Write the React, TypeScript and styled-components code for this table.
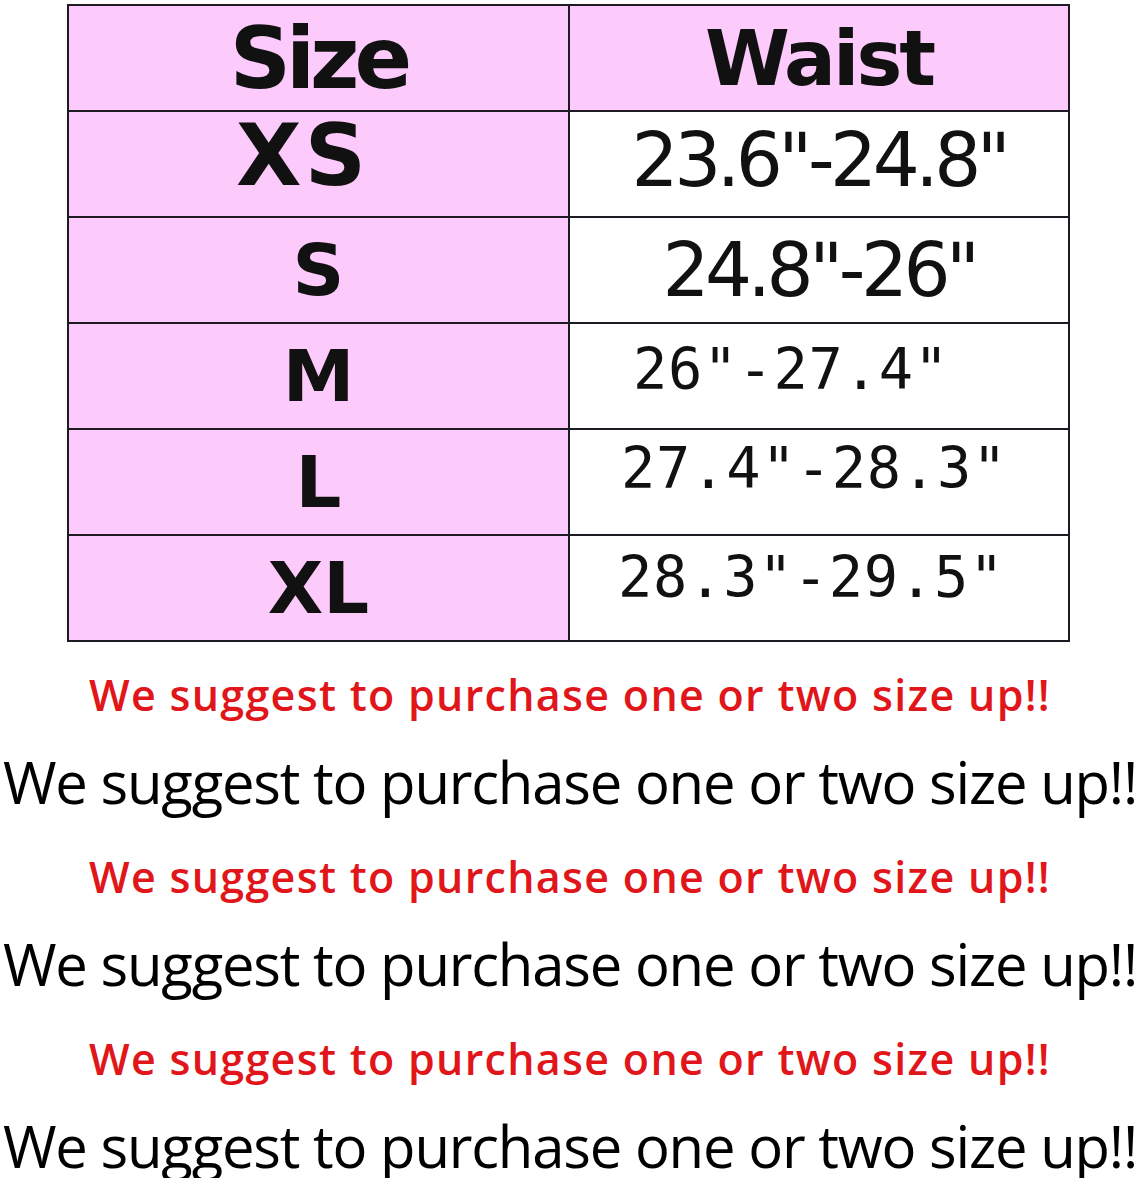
import styled, { createGlobalStyle, css } from "styled-components";

const GlobalStyle = createGlobalStyle`
  html, body {
    margin: 0;
    padding: 0;
    background: #ffffff;
  }
  body {
    font-family: "DejaVu Sans", Verdana, sans-serif;
  }
`;

const Page = styled.main`
  width: 1140px;
  display: flex;
  flex-direction: column;
  align-items: stretch;
  padding-top: 4px;
  box-sizing: border-box;
`;

const SizeTable = styled.section`
  margin-left: 67px;
  width: 1003px;
  box-sizing: border-box;
  display: grid;
  grid-template-columns: 499px 498px;
  grid-auto-rows: 104px;
  gap: 2px;
  padding: 2px;
  background: #1d1a22;
`;

const Cell = styled.div<{ $pink?: boolean; $lift?: number; $dx?: number }>`
  display: flex;
  align-items: center;
  justify-content: center;
  box-sizing: border-box;
  padding-bottom: ${(p) => (p.$lift ?? 0) * 2}px;
  padding-right: ${(p) => Math.max(0, -(p.$dx ?? 0) * 2)}px;
  padding-left: ${(p) => Math.max(0, (p.$dx ?? 0) * 2)}px;
  background: ${(p) => (p.$pink ? "#fccafb" : "#ffffff")};
  color: #111111;
  line-height: 1;
  white-space: nowrap;
`;

const SizeCell = styled(Cell)<{ $big?: boolean; $spacing?: number }>`
  font-family: "DejaVu Sans", Tahoma, sans-serif;
  font-weight: 700;
  font-size: ${(p) => (p.$big ? 85 : 72)}px;
  letter-spacing: ${(p) => p.$spacing ?? 0}px;
`;

const HeadCell = styled(SizeCell)`
  font-size: ${(p) => (p.$big ? 85 : 77)}px;
`;

const WaistCell = styled(Cell)<{ $mono?: boolean; $indent?: number }>`
  ${(p) =>
    p.$mono
      ? css`
          justify-content: flex-start;
          padding-left: ${p.$indent ?? 0}px;
          font-family: "DejaVu Sans Mono", "Liberation Mono", monospace;
          font-size: 57px;
          letter-spacing: 0.8px;
        `
      : css`
          font-family: "DejaVu Sans", Verdana, sans-serif;
          font-size: 74px;
          letter-spacing: -4.5px;
        `}
`;

const Notes = styled.div`
  margin-top: 28px;
  display: flex;
  flex-direction: column;
  align-items: center;
`;

const Note = styled.p<{ $tone: "red" | "black" }>`
  margin: 0;
  font-family: "Open Sans", "Noto Sans", sans-serif;
  white-space: nowrap;
  text-align: center;
  ${(p) =>
    p.$tone === "red"
      ? css`
          color: #e0161a;
          font-weight: 600;
          font-size: 43px;
          line-height: 50px;
          letter-spacing: 1.3px;
          margin-bottom: 30px;
        `
      : css`
          color: #000000;
          font-weight: 500;
          font-size: 58px;
          line-height: 64px;
          letter-spacing: -1.2px;
          margin-bottom: 38px;
        `}

  &:last-child {
    margin-bottom: 0;
  }
`;

type Row = {
  size: string;
  waist: string;
  big?: boolean;
  sizeLift?: number;
  sizeSpacing?: number;
  sizeDx?: number;
  mono?: boolean;
  indent?: number;
  waistLift?: number;
};

const rows: Row[] = [
  { size: "XS", waist: `23.6"-24.8"`, big: true, sizeLift: 9, sizeSpacing: 3, sizeDx: -16, waistLift: 4 },
  { size: "S", waist: `24.8"-26"` },
  { size: "M", waist: `26"-27.4"`, mono: true, indent: 63, waistLift: 7 },
  { size: "L", waist: `27.4"-28.3"`, mono: true, indent: 51, waistLift: 14 },
  { size: "XL", waist: `28.3"-29.5"`, mono: true, indent: 48, waistLift: 11 },
];

const note = "We suggest to purchase one or two size up!!";

export default function App() {
  return (
    <Page>
      <GlobalStyle />
      <SizeTable>
        <HeadCell $pink $big $spacing={-5}>
          Size
        </HeadCell>
        <HeadCell $pink $spacing={-3}>
          Waist
        </HeadCell>
        {rows.map((r) => [
          <SizeCell
            key={r.size + "-s"}
            $pink
            $big={r.big}
            $lift={r.sizeLift}
            $spacing={r.sizeSpacing}
            $dx={r.sizeDx}
          >
            {r.size}
          </SizeCell>,
          <WaistCell key={r.size + "-w"} $mono={r.mono} $indent={r.indent} $lift={r.waistLift}>
            {r.waist}
          </WaistCell>,
        ])}
      </SizeTable>
      <Notes>
        <Note $tone="red">{note}</Note>
        <Note $tone="black">{note}</Note>
        <Note $tone="red">{note}</Note>
        <Note $tone="black">{note}</Note>
        <Note $tone="red">{note}</Note>
        <Note $tone="black">{note}</Note>
      </Notes>
    </Page>
  );
}
